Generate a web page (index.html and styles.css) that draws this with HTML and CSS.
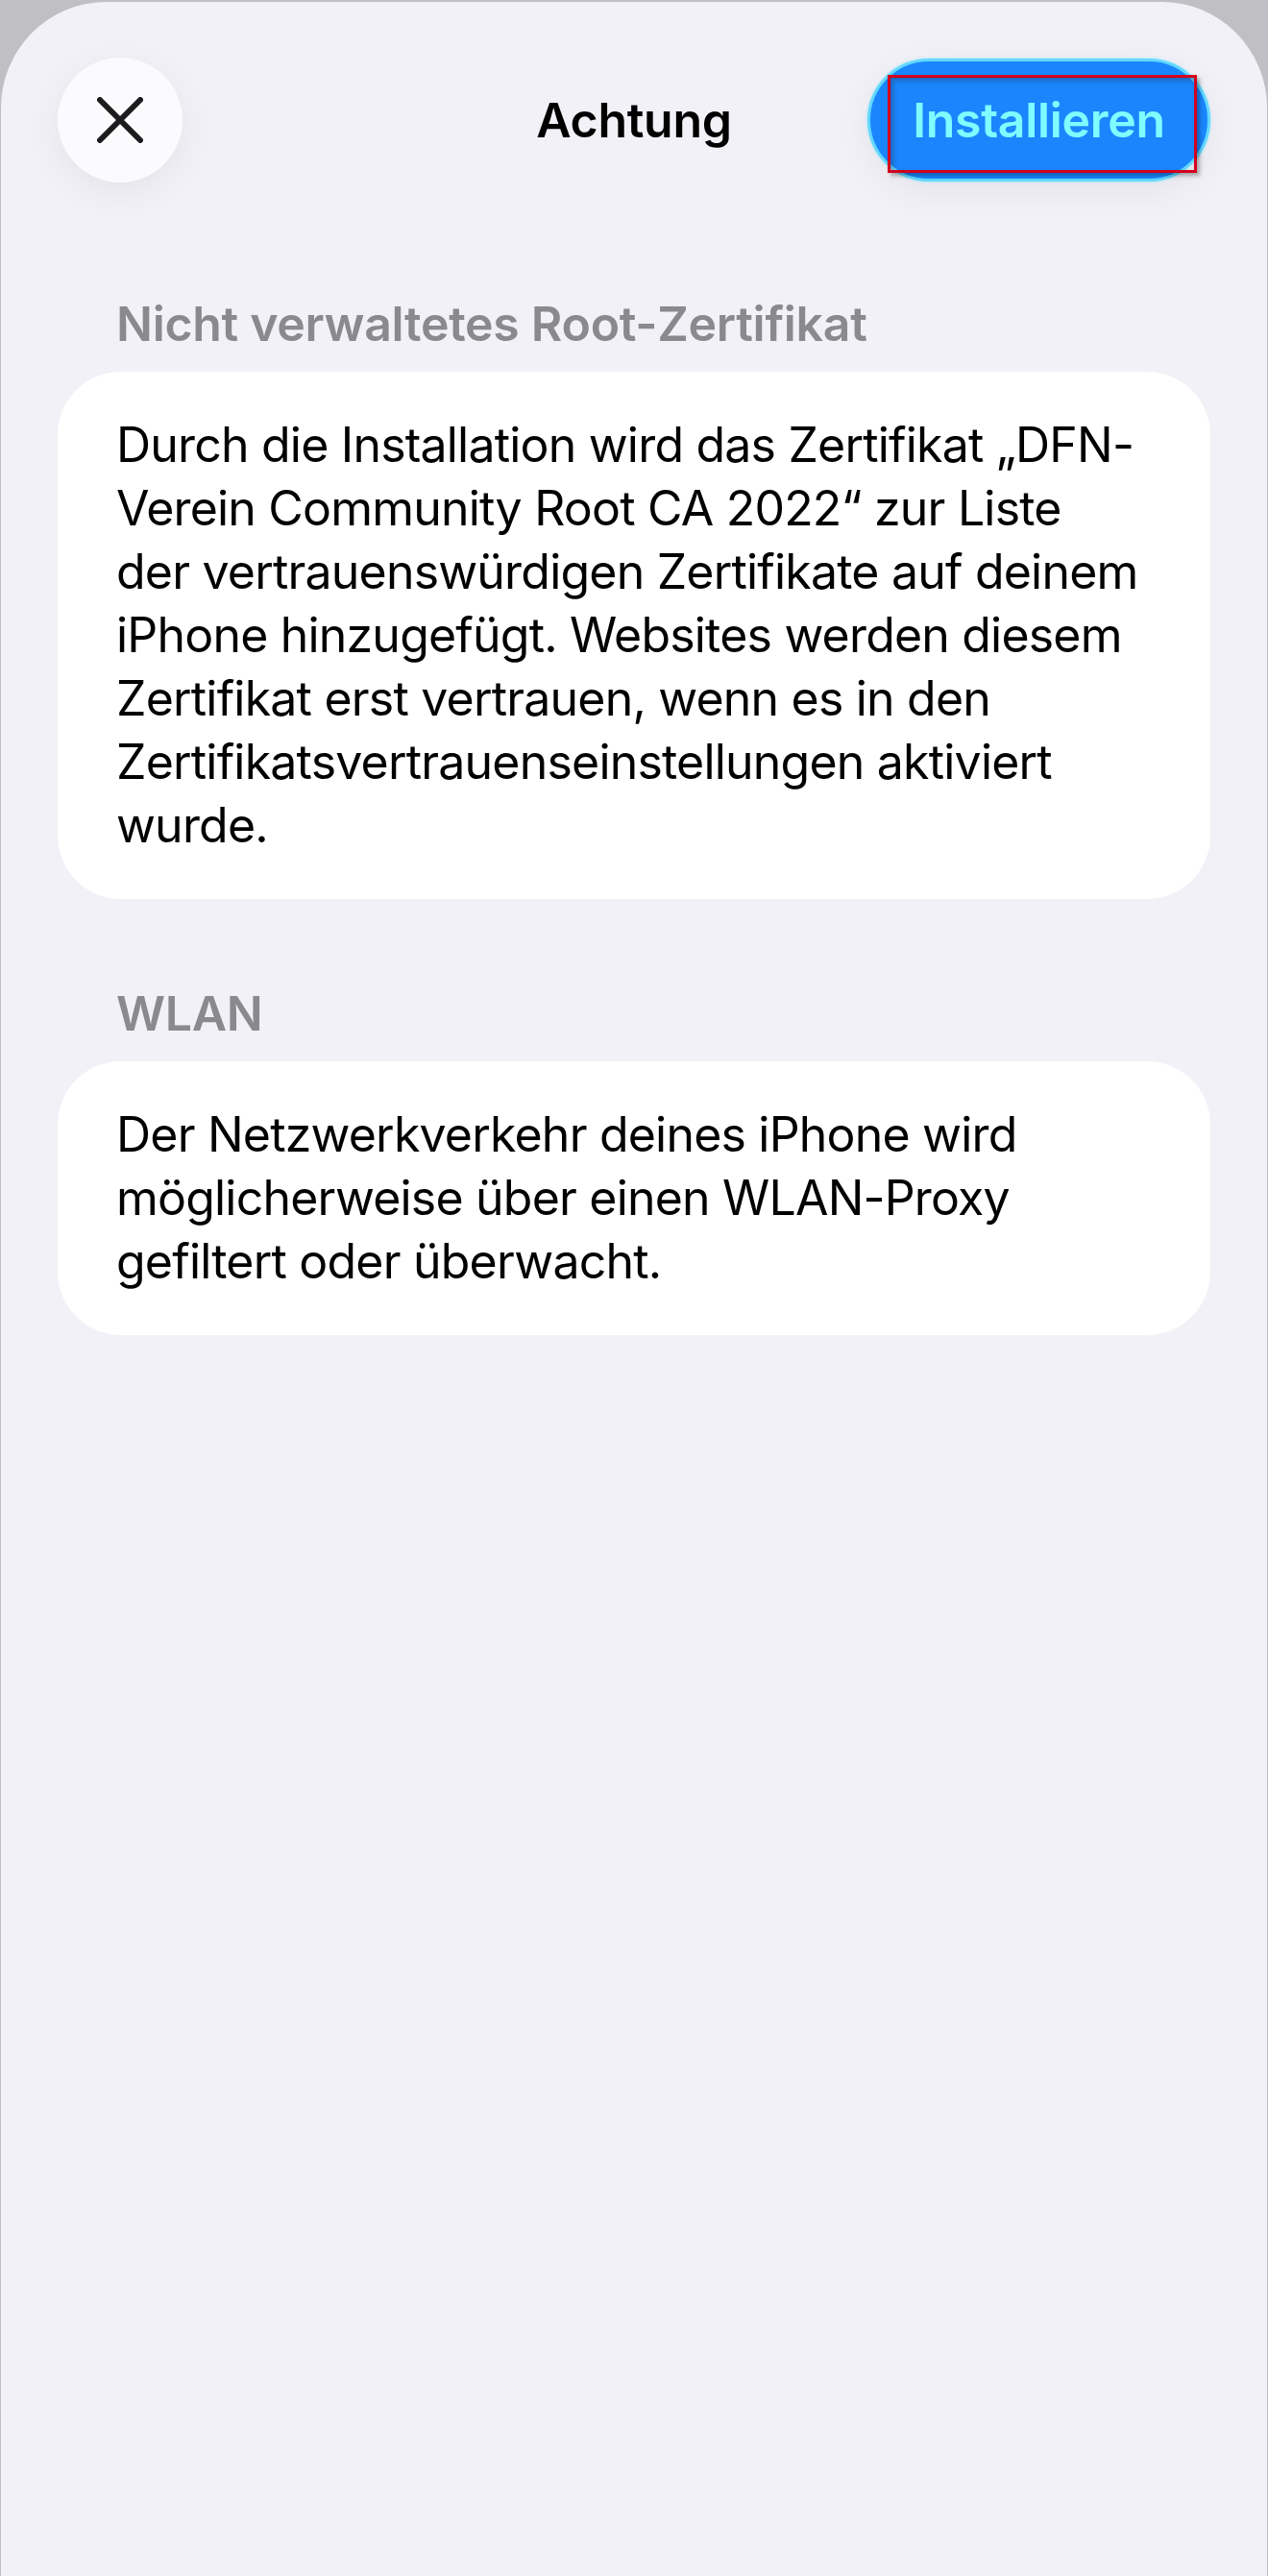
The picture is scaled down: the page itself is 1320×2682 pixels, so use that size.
FILE: index.html
```html
<!DOCTYPE html>
<html lang="de">
<head>
    <title>Achtung</title>
    <meta name="viewport" content="width=device-width, initial-scale=1.0">
    <link rel="stylesheet" href="styles.css">
</head>
<body>
    <div class="sheet">
        <!-- Navigation bar -->
        <header class="nav">
            <button type="button" class="close-btn" aria-label="Schließen">
                <svg viewBox="0 0 48 48" width="48" height="48">
                    <path d="M3 3 L45 45 M45 3 L3 45" stroke="#1c1c1e" stroke-width="6" stroke-linecap="round" fill="none"/>
                </svg>
            </button>
            <h1>Achtung</h1>
            <div class="install-wrap">
                <button type="button" class="install-btn">Installieren</button>
                <span class="mark"></span>
            </div>
        </header>

        <!-- Root certificate -->
        <section class="group">
            <h2>Nicht verwaltetes Root-Zertifikat</h2>
            <div class="card">
                <p>Durch die Installation wird das Zertifikat „DFN-<br>Verein Community Root CA 2022“ zur Liste<br>der vertrauenswürdigen Zertifikate auf deinem<br>iPhone hinzugefügt. Websites werden diesem<br>Zertifikat erst vertrauen, wenn es in den<br>Zertifikatsvertrauenseinstellungen aktiviert<br>wurde.</p>
            </div>
        </section>

        <!-- WLAN -->
        <section class="group">
            <h2>WLAN</h2>
            <div class="card">
                <p>Der Netzwerkverkehr deines iPhone wird<br>möglicherweise über einen WLAN-Proxy<br>gefiltert oder überwacht.</p>
            </div>
        </section>
    </div>
</body>
</html>
```

FILE: styles.css
```css
* {
    box-sizing: border-box;
    margin: 0;
    padding: 0;
}

body {
    font-family: Inter, "Noto Sans", sans-serif;
    background: #bfbfc4;
    color: #000;
}

/* The sheet that slides over the page */
.sheet {
    margin: 2px 1px 0;
    min-height: 2680px;
    background: #f2f1f7;
    border-radius: 110px 110px 0 0;
    padding: 58px 59px 0;
}

.nav {
    display: grid;
    grid-template-columns: 1fr auto 1fr;
    align-items: center;
    height: 130px;
}

.close-btn {
    justify-self: start;
    width: 130px;
    height: 130px;
    border: none;
    border-radius: 50%;
    background: #fbfbfd;
    box-shadow: 0 10px 40px rgba(0, 0, 0, 0.06);
    display: flex;
    align-items: center;
    justify-content: center;
}

h1 {
    font-size: 50px;
    font-weight: 600;
    letter-spacing: -0.3px;
}

.install-wrap {
    justify-self: end;
    position: relative;
}

.install-btn {
    display: block;
    width: 357px;
    height: 128px;
    border: 3px solid #62d8ff;
    border-radius: 64px;
    background: #1a86fd;
    color: #7ffcff;
    font-family: Inter, "Noto Sans", sans-serif;
    font-size: 50px;
    font-weight: 600;
    letter-spacing: -0.3px;
    box-shadow: 0 0 3px #8be6ff, 0 10px 40px rgba(0, 0, 0, 0.06);
}

/* red highlight frame drawn over the button */
.mark {
    position: absolute;
    left: 21px;
    top: 17px;
    width: 322px;
    height: 102px;
    border: 3px solid #d3021d;
    box-shadow: inset 3px 3px 5px rgba(40, 40, 60, 0.35), 3px 3px 4px rgba(0, 0, 0, 0.3);
}

/* Grouped list sections */
.group h2 {
    font-size: 50px;
    line-height: 58px;
    font-weight: 600;
    color: #8a8a8e;
    padding-left: 61px;
    margin-bottom: 21px;
    letter-spacing: -0.3px;
}

.group:first-of-type {
    margin-top: 118px;
}

.group + .group {
    margin-top: 90px;
}

.card {
    background: #fff;
    border-radius: 66px;
    padding: 43px 50px 44px 61px;
}

.card p {
    font-size: 50px;
    line-height: 66px;
    letter-spacing: -0.8px;
    white-space: nowrap;
}
```
